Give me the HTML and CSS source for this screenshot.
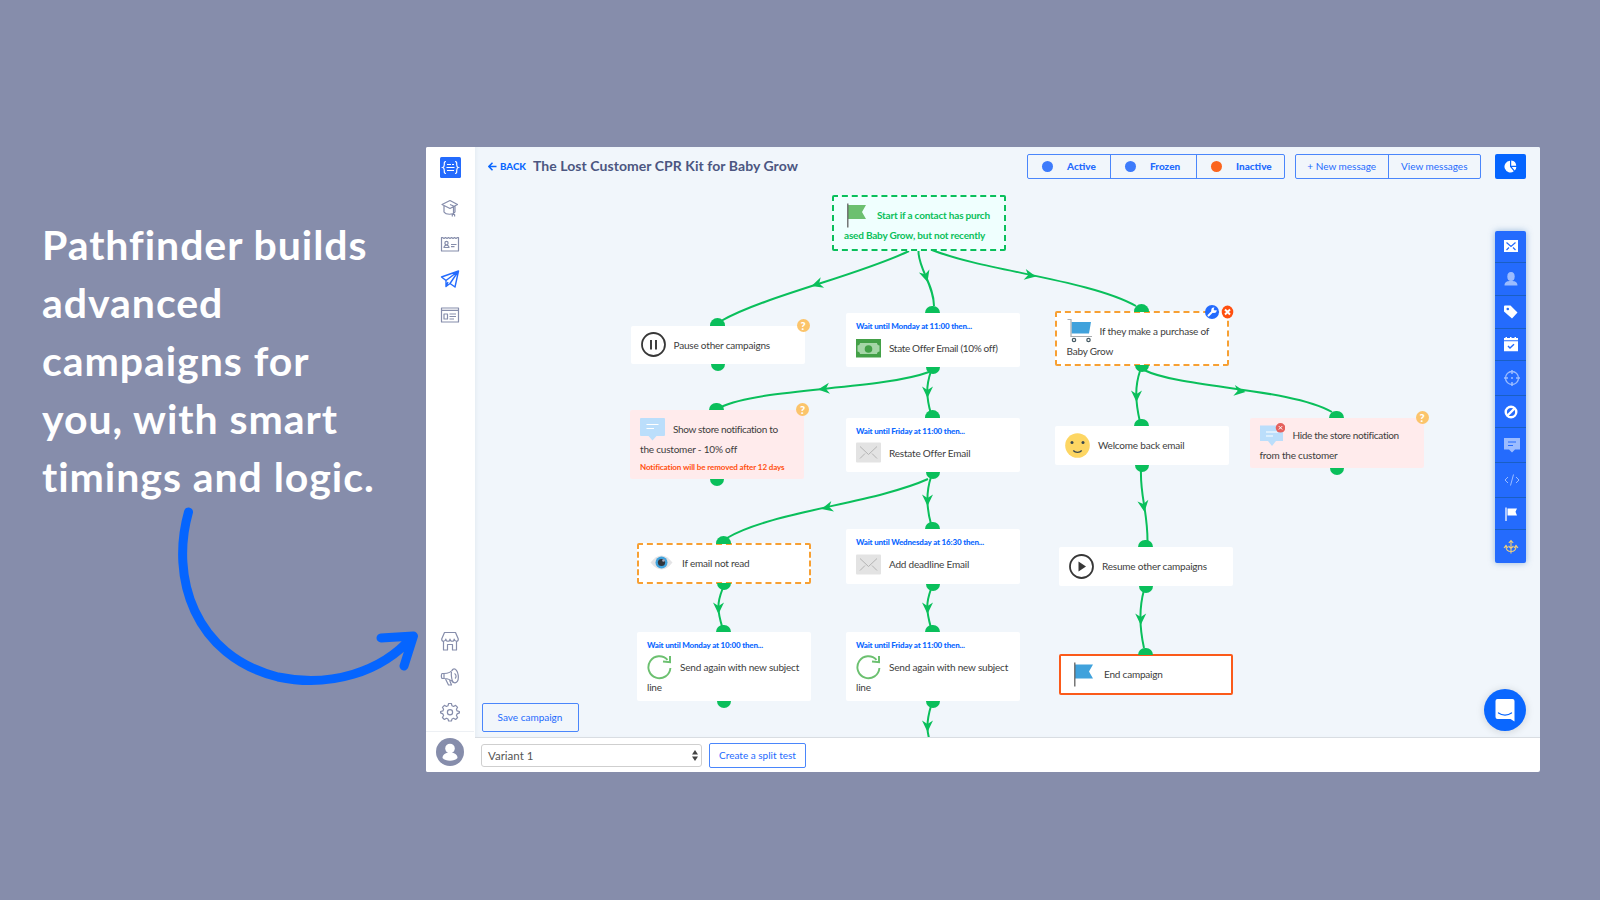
FILE: index.html
```html
<!DOCTYPE html>
<html lang="en">
<head>
    <meta charset="UTF-8">
    <meta name="viewport" content="width=device-width, initial-scale=1.0">
    <title>Pathfinder</title>
    <link rel="stylesheet" href="styles.css">
</head>
<body>
    <!-- shared icons -->
    <svg class="sprite">
        <symbol id="i-mail" viewBox="0 0 25 20"><rect width="25" height="20" rx="1" fill="#e3e3e3"/><path d="M4 4l8.5 8L21 4M4 16l5-5M21 16l-5-5" fill="none" stroke="#b4b4b4"/></symbol>
        <symbol id="i-again" viewBox="0 0 25 25"><path d="M20.5 4.8A11 11 0 1 0 23.4 13" fill="none" stroke="#6cc070" stroke-width="1.9"/><path d="M23 1V7.2L16 6.6" fill="none" stroke="#6cc070" stroke-width="2"/></symbol>
        <symbol id="i-bubble" viewBox="0 0 25 23"><path d="M1 0h23a1 1 0 0 1 1 1v16a1 1 0 0 1-1 1h-7.5l-4 4.500l-4-4.500H1a1 1 0 0 1-1-1V1a1 1 0 0 1 1-1z" fill="#bbdefb"/><path d="M6.500 6.500h12M6.500 10.500h7.500" stroke="#fff" stroke-width="1.200"/></symbol>
    </svg>

    <div class="intro">
        <h1>Pathfinder builds<br>advanced<br>campaigns for<br>you, with smart<br>timings and logic.</h1>
        <svg class="swoosh" viewBox="170 500 260 200" width="260" height="200">
            <path d="M188.500 512C170 577 194 656 278 677C330 688 382 672 412 637M381 638L413.500 636L404 666"/>
        </svg>
    </div>

    <div class="app">
        <nav class="sidebar">
            <svg class="logo" viewBox="0 0 21 21" width="21" height="21"><rect width="21" height="21" rx="1.500" fill="#246bfd"/><path d="M6 4.500c-2 0-1.700 1.500-1.700 3s0 2.500-1.500 3c1.500.5 1.500 1.500 1.500 3s-.3 3 1.700 3M15 4.500c2 0 1.700 1.500 1.700 3s0 2.500 1.500 3c-1.500.5-1.500 1.500-1.500 3s.3 3-1.700 3M7 7.500h4M12 7.500h2M6.500 10.500h8M7 13.500h7" fill="none" stroke="#fff" stroke-width="1.200"/></svg>
            <svg class="nav-icon" viewBox="0 0 20 20"><path d="M2 6.500L10 2.500l7.500 4-7.500 4zM4 8v6c2 3 9 3 11 0V8M10 6.500l3.500 1.500v8.500M12.300 18.500v-2h2.300v2"/></svg>
            <svg class="nav-icon" viewBox="0 0 20 20"><path d="M1.500 3.500v13.500h17V3.500h-1l-1.500 1-1.500-1-1.500 1-1.500-1-1.500 1-1.500-1-1.500 1-1.500-1-1.500 1-1.500-1zM4 13.500c0-2 1-2 2-2.300h1c1 .3 2 .3 2 2.300zM6.500 7.300a1.500 1.700 0 1 1 0 3.600a1.500 1.700 0 1 1 0-3.600M11 10.500h5.500M11 12.700h3.500"/></svg>
            <svg class="nav-icon active" viewBox="0 0 20 20"><path d="M1.500 8L18.500 2l-3.500 16-5-3.500-4 3V11.500zM6 11.500L18.500 2l-8.500 12.500M6 17.500l2-4.500"/></svg>
            <svg class="nav-icon" viewBox="0 0 20 20"><path d="M1.500 3h17v14h-17zM1.500 5.300h17M4 9h3.500v5H4zM9.500 9h6.500M9.500 11.500h6.500M9.500 14h4.500"/></svg>
            <div class="spacer"></div>
            <svg class="nav-icon" viewBox="0 0 20 20"><path d="M4.500 1.500h11l2.800 6.500c0 3-3.500 3-4.100 0c0 3-4.100 3-4.200 0c0 3-4.100 3-4.200 0c-.5 3-4.100 3-4.100 0zM3.500 10.500v8.500h4v-5.500h5v5.500h4v-8.500"/></svg>
            <svg class="nav-icon" viewBox="0 0 20 20"><path d="M2 6.500h2v5h-2c-.8-1.500-.8-3.500 0-5zM4 6.500c4 0 7-1 9.500-4.500M4 11.500c4 0 7 1 9.500 4.300M5.500 12l3 6h3l-2-5M13.500 2c5-1 7 12.500 1.500 13.800c-4 .2-5-13-1.500-13.800zM14.500 6.500c2 1 2 4 .5 5"/></svg>
            <svg class="nav-icon gear" viewBox="0 0 20 20"><path d="M8.600 1.500h2.800l.6 2.300 1.600.7 2-1.200 2 2-1.200 2 .7 1.600 2.300.6v1.400l-2.300 1-.7 1.600 1.200 2-2 2-2-1.200-1.600.7-.6 2H8.600l-.6-2-1.600-.7-2 1.200-2-2 1.200-2-.7-1.600-2.300-1V9.500l2.300-.6.7-1.600-1.200-2 2-2 2 1.200 1.600-.7z"/><circle cx="10" cy="10.300" r="2.600"/></svg>
            <div class="profile">
                <svg viewBox="0 0 28 28" width="28" height="28"><circle cx="14" cy="14" r="14" fill="#868dab"/><circle cx="14" cy="10.500" r="4.800" fill="#fff"/><path d="M6.500 20c0-3.500 3-5 5-5h5c2 0 5 1.500 5 5c-3 3.500-12 3.500-15 0z" fill="#fff"/></svg>
            </div>
        </nav>

        <div class="main">
            <div class="canvas">
                <svg class="edges" viewBox="475 147 1065 590" width="1065" height="590">
                    <path d="M909 251C860 275 765 296 721 321"/>
                    <path d="M918.500 251C918 268 934 285 934 306"/>
                    <path d="M932 250C985 271 1090 280 1136 306"/>
                    <path d="M929 372C880 390 760 388 721 407"/>
                    <path d="M931 371C926 386 926 396 931 414"/>
                    <path d="M928 479C875 503 770 512 727 538"/>
                    <path d="M931 477C926 492 926 506 931 524"/>
                    <path d="M931 589C926 603 926 610 931 628"/>
                    <path d="M722.500 589C717 603 717 610 722.500 628"/>
                    <path d="M931 706C927 719 926 728 929 738"/>
                    <path d="M1140 371C1135 386 1135 400 1140 422"/>
                    <path d="M1144 370C1180 388 1290 388 1332 412"/>
                    <path d="M1141 470C1140 496 1147.500 510 1147.500 541"/>
                    <path d="M1144 590C1139 608 1140 630 1144 648"/>
                    <g class="heads">
                        <path d="M0 0L-11.500-5.500L-8 0L-11.500 5.500Z" transform="translate(811.500 286)rotate(162)"/>
                        <path d="M0 0L-11.500-5.500L-8 0L-11.500 5.500Z" transform="translate(927.500 282)rotate(73)"/>
                        <path d="M0 0L-11.500-5.500L-8 0L-11.500 5.500Z" transform="translate(1036 276.500)rotate(11)"/>
                        <path d="M0 0L-11.500-5.500L-8 0L-11.500 5.500Z" transform="translate(818 389.500)rotate(174)"/>
                        <path d="M0 0L-11.500-5.500L-8 0L-11.500 5.500Z" transform="translate(927.500 398)rotate(90)"/>
                        <path d="M0 0L-11.500-5.500L-8 0L-11.500 5.500Z" transform="translate(821.500 509)rotate(166)"/>
                        <path d="M0 0L-11.500-5.500L-8 0L-11.500 5.500Z" transform="translate(927.500 506)rotate(90)"/>
                        <path d="M0 0L-11.500-5.500L-8 0L-11.500 5.500Z" transform="translate(927.500 614)rotate(90)"/>
                        <path d="M0 0L-11.500-5.500L-8 0L-11.500 5.500Z" transform="translate(718.500 614)rotate(90)"/>
                        <path d="M0 0L-11.500-5.500L-8 0L-11.500 5.500Z" transform="translate(927.500 732)rotate(90)"/>
                        <path d="M0 0L-11.500-5.500L-8 0L-11.500 5.500Z" transform="translate(1136.500 402)rotate(90)"/>
                        <path d="M0 0L-11.500-5.500L-8 0L-11.500 5.500Z" transform="translate(1245.500 392)rotate(8)"/>
                        <path d="M0 0L-11.500-5.500L-8 0L-11.500 5.500Z" transform="translate(1144.500 512)rotate(82)"/>
                        <path d="M0 0L-11.500-5.500L-8 0L-11.500 5.500Z" transform="translate(1140.700 625)rotate(90)"/>
                    </g>
                </svg>

                <div class="node start n-start">
                    <div class="row"><svg class="icon" viewBox="0 0 25 25"><path d="M4 2h18l-4 7 4 7H4z" fill="#6cc070"/><path d="M3.800.5v24" stroke="#616161" stroke-width="1.300"/></svg><span>Start if a contact has purch</span></div>
                    <div class="row">ased Baby Grow, but not recently</div>
                </div>

                <div class="node ports n-pause">
                    <div class="row"><svg class="icon" viewBox="0 0 25 25"><circle cx="12.500" cy="12.500" r="11.500" fill="none" stroke="#373737" stroke-width="1.800"/><path d="M10 8v9.500M15 8v9.500" stroke="#373737" stroke-width="1.900"/></svg><span>Pause other campaigns</span></div>
                    <b class="help">?</b>
                </div>

                <div class="node ports timed n-state">
                    <div class="wait">Wait until Monday at 11:00 then...</div>
                    <div class="row tight"><svg class="icon" viewBox="0 0 25 25"><path d="M0 3h25v18.500H0z" fill="#43a047"/><path d="M4 7h17c0 1.500 1 2.500 2.500 2.500v6c-1.500 0-2.500 1-2.500 2.500H4c0-1.500-1-2.500-2.500-2.500v-6C3 9.500 4 8.500 4 7z" fill="#a5d6a7"/><circle cx="12.500" cy="13" r="3.800" fill="#43a047"/></svg><span>State Offer Email (10% off)</span></div>
                </div>

                <div class="node ports condition n-purchase">
                    <div class="row"><svg class="icon" viewBox="0 0 25 25"><path d="M4.500 4H24l-2 11.500H4.500z" fill="#40a2dc"/><path d="M.5 1.500H4V18.500H25" fill="none" stroke="#a9adb0" stroke-width="1.200"/><circle cx="7" cy="22" r="1.700" fill="#fff" stroke="#455a64" stroke-width="1.200"/><circle cx="21.500" cy="22" r="1.700" fill="#fff" stroke="#455a64" stroke-width="1.200"/></svg><span>If they make a purchase of</span></div>
                    <div class="row">Baby Grow</div>
                    <svg class="tools" viewBox="0 0 30 14" width="30" height="14"><circle cx="7" cy="7" r="7" fill="#246bfd"/><path d="M3.500 10.500L8 6" stroke="#fff" stroke-width="2" stroke-linecap="round"/><path d="M9.500 2.600A2.700 2.700 0 1 0 11.600 5L9.800 5.600 8.600 4.300z" fill="#fff"/><ellipse cx="22.500" cy="7" rx="5.800" ry="6.500" fill="#ff4f0f"/><path d="M20 4.500l5 5M25 4.500l-5 5" stroke="#fff" stroke-width="2"/></svg>
                </div>

                <div class="node ports warn n-show">
                    <div class="row tight"><svg class="icon"><use href="#i-bubble"/></svg><span>Show store notification to</span></div>
                    <div class="row">the customer - 10% off</div>
                    <div class="note">Notification will be removed after 12 days</div>
                    <b class="help">?</b>
                </div>

                <div class="node ports timed n-restate">
                    <div class="wait">Wait until Friday at 11:00 then...</div>
                    <div class="row"><svg class="icon"><use href="#i-mail"/></svg><span>Restate Offer Email</span></div>
                </div>

                <div class="node ports n-welcome">
                    <div class="row"><svg class="icon" viewBox="0 0 25 25"><circle cx="12.500" cy="12.500" r="12.300" fill="#fdd663"/><circle cx="7" cy="9.500" r="1.500" fill="#37474f"/><circle cx="18" cy="9.500" r="1.500" fill="#37474f"/><path d="M8.300 17.500c2 2.500 6.400 2.500 8.400 0" fill="none" stroke="#37474f" stroke-width="1.300"/></svg><span>Welcome back email</span></div>
                </div>

                <div class="node ports warn n-hide">
                    <div class="row tight"><svg class="icon" viewBox="0 0 25 25"><path d="M1 2.500h22v15.500h-7l-4 5-4-5H0V2.500z" fill="#bbdefb"/><path d="M6 9h12M6 13h7" stroke="#fff" stroke-width="1.200"/><circle cx="20.500" cy="4.800" r="4.800" fill="#e5605c"/><path d="M18.800 3.100l3.400 3.400M22.200 3.100l-3.400 3.400" stroke="#fff"/></svg><span>Hide the store notification</span></div>
                    <div class="row">from the customer</div>
                    <b class="help">?</b>
                </div>

                <div class="node ports condition n-unread">
                    <div class="row"><svg class="icon" viewBox="0 0 25 25"><path d="M1.500 12.500Q12.500-1.500 23.500 12.500Q12.500 26.500 1.500 12.500z" fill="#e4e4e6"/><circle cx="12.500" cy="12.500" r="6" fill="#40a2dc"/><circle cx="12.500" cy="12.500" r="3.600" fill="#31353c"/><circle cx="14.500" cy="10.500" r="1.300" fill="#aab"/></svg><span>If email not read</span></div>
                </div>

                <div class="node ports timed n-deadline">
                    <div class="wait">Wait until Wednesday at 16:30 then...</div>
                    <div class="row"><svg class="icon"><use href="#i-mail"/></svg><span>Add deadline Email</span></div>
                </div>

                <div class="node ports n-resume">
                    <div class="row"><svg class="icon" viewBox="0 0 25 25"><circle cx="12.500" cy="12.500" r="11.500" fill="none" stroke="#373737" stroke-width="1.800"/><path d="M9.500 7.500L17 12.500L9.500 17.500z" fill="#373737"/></svg><span>Resume other campaigns</span></div>
                </div>

                <div class="node ports timed n-again-left">
                    <div class="wait">Wait until Monday at 10:00 then...</div>
                    <div class="row"><svg class="icon"><use href="#i-again"/></svg><span>Send again with new subject</span></div>
                    <div class="row">line</div>
                </div>

                <div class="node ports timed n-again">
                    <div class="wait">Wait until Friday at 11:00 then...</div>
                    <div class="row"><svg class="icon"><use href="#i-again"/></svg><span>Send again with new subject</span></div>
                    <div class="row">line</div>
                </div>

                <div class="node ports end n-end">
                    <div class="row"><svg class="icon" viewBox="0 0 25 25"><path d="M4 2.500h18l-4 7 4 7H4z" fill="#40a2dc"/><path d="M3.800.5v24" stroke="#616161" stroke-width="1.300"/></svg><span>End campaign</span></div>
                </div>

                <header class="topbar">
                    <a class="back"><svg viewBox="0 0 9 9" width="9" height="9"><path d="M8.500 4.500H1M4.500.8L.9 4.500L4.500 8.200" fill="none" stroke="#0a67ff" stroke-width="1.500"/></svg>BACK</a>
                    <h2>The Lost Customer CPR Kit for Baby Grow</h2>
                    <div class="group status">
                        <span class="s-active"><i></i>Active</span>
                        <span class="s-frozen"><i></i>Frozen</span>
                        <span class="s-inactive"><i class="off"></i>Inactive</span>
                    </div>
                    <div class="group messages">
                        <span>+ New message</span>
                        <span>View messages</span>
                    </div>
                    <div class="chart"><svg viewBox="0 0 13 13" width="13" height="13"><path d="M6 .8v6l3.800 4.400A5.800 5.800 0 1 1 6 .8z" fill="#fff"/><path d="M7.200.5a5.500 5.500 0 0 1 5 5.300h-5zM7.800 7h4.500a5 5 0 0 1-1.600 3.500z" fill="#fff"/></svg></div>
                </header>

                <div class="palette">
                    <div class="p1"><svg viewBox="0 0 16 16"><path d="M1 2h14v12H1z" fill="#fff"/><path d="M3.500 4.500L8 8.500l4.500-4M3.500 12L6 9.500M12.500 12L10 9.500" fill="none" stroke="#246bfd" stroke-width="1.200"/></svg></div>
                    <div class="p2 dim"><svg viewBox="0 0 16 16"><ellipse cx="8" cy="5.500" rx="3.700" ry="4.500" fill="#fff"/><path d="M1.500 14.500c0-4 3-4 4.500-4.500h4c1.500.5 4.500.5 4.500 4.500z" fill="#fff"/></svg></div>
                    <div class="p3"><svg viewBox="0 0 16 16"><path d="M1 2.500a1 1 0 0 1 1-1H7.500L14.500 8.500 9 14.500 1 7.500z" fill="#fff"/><circle cx="4.800" cy="5" r="1.300" fill="#246bfd"/></svg></div>
                    <div class="p4"><svg viewBox="0 0 16 16"><path d="M1 2h1.500V1H4v1h3V1h1.500v1h3V1H13v1h2v2.200H1zM1 5.200h14v10H1z" fill="#fff"/><path d="M5 10l2 2 4-3.800" fill="none" stroke="#246bfd" stroke-width="1.400"/></svg></div>
                    <div class="p5 dim"><svg viewBox="0 0 16 16"><circle cx="9" cy="8" r="6.500" fill="none" stroke="#fff" stroke-width="1.300"/><path d="M9 0v4M9 12v4M1 8h4M13 8h4M8 8h2" stroke="#fff" stroke-width="1.500"/></svg></div>
                    <div class="p6"><svg viewBox="0 0 16 16"><circle cx="8" cy="8" r="5.300" fill="none" stroke="#fff" stroke-width="2.400"/><path d="M4.500 11.500l7-7" stroke="#fff" stroke-width="2.400"/></svg></div>
                    <div class="p7 dim"><svg viewBox="0 0 16 16"><path d="M1 1h16v11.500h-5l-3 3-3-3H1z" fill="#fff"/><path d="M5 5h8M5 8.500h5" stroke="#246bfd"/></svg></div>
                    <div class="p8 dim"><svg viewBox="0 0 16 16"><path d="M5 5L2 8l3 3M13 5l3 3-3 3M10.500 2.500l-3 11" fill="none" stroke="#fff"/></svg></div>
                    <div class="p9"><svg viewBox="0 0 16 16"><path d="M4.500 2.500h9.500l-1.500 3.300L14 9.500H4.500z" fill="#fff"/><path d="M3 1.500v13.500" stroke="#dbe6ff" stroke-width="1.500"/></svg></div>
                    <div class="p10"><svg viewBox="0 0 16 16"><path d="M8 14.500V2M5.800 4L8 1.500 10.200 4M8 12.500c-3 0-5-1.500-5-5M8 12.500c3 0 5-1.500 5-5M1 9l2-2.500L5 9M11 9l2-2.500L15 9M5.500 7L8 9.500 10.500 7" fill="none" stroke="#f3cf7a" stroke-width="1.100"/></svg></div>
                </div>

                <button class="save">Save campaign</button>
                <div class="chat"><svg viewBox="0 0 20 23" width="20" height="23"><path d="M2.500 0h15a2 2 0 0 1 2 2v20.500l-4-2.500h-13a2 2 0 0 1-2-2V2a2 2 0 0 1 2-2z" fill="#fff"/><path d="M3.500 14c3.500 2.700 9.500 2.700 13 0" fill="none" stroke="#0a67ff" stroke-width="1.300" stroke-linecap="round"/></svg></div>
            </div>

            <footer class="bottombar">
                <div class="variant">Variant 1<svg viewBox="0 0 6 11" width="6" height="11"><path d="M0 4.500L3 0l3 4.500zM0 6.500h6L3 11z" fill="#444"/></svg></div>
                <button class="split">Create a split test</button>
            </footer>
        </div>
    </div>
</body>
</html>
```
FILE: styles.css
```css
* {
    box-sizing: border-box;
}

body {
    margin: 0;
    width: 1600px;
    height: 900px;
    overflow: hidden;
    display: flex;
    padding-top: 147px;
    background-color: #868dab;
    font-family: Lato, "Open Sans", sans-serif;
}

.sprite {
    display: none;
}

/* left side pitch */
.intro {
    width: 426px;
    flex-shrink: 0;
    padding: 69px 0 0 42px;
}

h1 {
    margin: 0;
    color: #fff;
    font-size: 41px;
    line-height: 58px;
    font-weight: 700;
    letter-spacing: 0.95px;
    white-space: nowrap;
}

.swoosh {
    position: absolute;
    left: 170px;
    top: 500px;
    z-index: 2;
    fill: none;
    stroke: #0565ff;
    stroke-width: 9;
    stroke-linecap: round;
    stroke-linejoin: round;
}

/* app window */
.app {
    width: 1114px;
    height: 625px;
    display: flex;
    background-color: #fff;
    border-radius: 2px;
    overflow: hidden;
}

.sidebar {
    width: 49px;
    display: flex;
    flex-direction: column;
    align-items: center;
    padding-top: 10px;
    padding-right: 1px;
    background-color: #fff;
}

.logo {
    margin-bottom: 20px;
}

.nav-icon {
    width: 20px;
    height: 20px;
    margin-bottom: 15.5px;
    flex-shrink: 0;
    fill: none;
    stroke: #868dab;
    stroke-width: 1.2;
    stroke-linejoin: round;
}

.nav-icon.active {
    stroke: #246bfd;
    stroke-width: 1.4;
}

.spacer {
    flex-grow: 1;
}

.nav-icon.gear {
    margin-bottom: 9px;
}

.profile {
    width: 100%;
    height: 41px;
    border-top: 1px solid #edf0f4;
    padding-top: 6px;
    text-align: center;
    flex-shrink: 0;
}

.main {
    flex-grow: 1;
    display: flex;
    flex-direction: column;
}

.canvas {
    position: relative;
    height: 590px;
    background-color: #f1f6fb;
    box-shadow: inset 3px 0 4px -2px #e3eaf1;
    overflow: hidden;
}

.edges {
    position: absolute;
    left: 0;
    top: 0;
    fill: none;
    stroke: #0abf5b;
    stroke-width: 2;
}

.heads {
    fill: #0abf5b;
    stroke: none;
}

/* top bar */
.topbar {
    position: relative;
    display: flex;
    align-items: center;
    height: 25px;
    margin-top: 6.5px;
    padding: 0 14px 0 13px;
}

.back {
    display: flex;
    align-items: center;
    gap: 3px;
    width: 45px;
    color: #0a67ff;
    font-size: 9.7px;
    font-weight: 900;
}

h2 {
    margin: 0 auto 0 0;
    color: #4c5681;
    font-size: 14px;
    font-weight: 700;
    letter-spacing: 0.06px;
    line-height: 20px;
}

.group {
    display: flex;
    height: 25px;
    border: 1px solid #4a86fb;
    border-radius: 2px;
    color: #246bfd;
    font-size: 10px;
}

.group span {
    display: flex;
    align-items: center;
    padding-bottom: 1px;
}

.group span + span {
    border-left: 1px solid #4a86fb;
}

.status {
    width: 258px;
    margin-right: 10px;
    font-weight: 900;
}

.status i {
    width: 11px;
    height: 11px;
    margin: 1px 14px 0 14px;
    border-radius: 50%;
    background-color: #3d7bfb;
}

.status i.off {
    background-color: #fb651e;
}

.s-active {
    width: 82px;
}

.s-frozen {
    width: 86px;
}

.messages {
    width: 186px;
    margin-right: 14px;
}

.messages span {
    flex: 1;
    justify-content: center;
}

.chart {
    width: 31px;
    height: 25px;
    display: flex;
    align-items: center;
    justify-content: center;
    background-color: #0565ff;
    border-radius: 2px;
}

/* campaign nodes */
.node {
    position: absolute;
    width: 174px;
    padding: 9px 10px 0;
    background-color: #fff;
    border-radius: 2px;
    color: #3d3d3d;
    font-size: 10px;
    letter-spacing: -0.2px;
    white-space: nowrap;
}

.row {
    display: flex;
    align-items: center;
    gap: 8px;
    height: 20px;
}

.row.tight {
    letter-spacing: -0.33px;
}

.icon {
    width: 25px;
    height: 25px;
    flex-shrink: 0;
}

.timed {
    padding-top: 5px;
}

.wait {
    height: 16px;
    margin-bottom: 4px;
    line-height: 16px;
    color: #0a67ff;
    font-size: 8px;
    font-weight: 900;
    letter-spacing: -0.17px;
}

.note {
    line-height: 16px;
    color: #ff4f0f;
    font-size: 8px;
    font-weight: 700;
    letter-spacing: -0.1px;
}

.start {
    padding-top: 8px;
    border: 2px dashed #0abf5b;
    background-color: #effffe;
    color: #0abf5b;
    font-weight: 700;
}

.condition {
    padding-top: 8px;
    border: 2px dashed #f7a033;
}

.end {
    padding-top: 8px;
    border: 2px solid #fb5a1a;
}

.warn {
    background-color: #ffebec;
}

/* half circles where the connectors meet a node */
.ports::before,
.ports::after {
    content: "";
    position: absolute;
    left: 50%;
    background-color: #0abf5b;
}

.ports::before {
    bottom: 100%;
    width: 15px;
    height: 7.5px;
    margin-left: -8px;
    border-radius: 8px 8px 0 0;
}

.ports::after {
    top: 100%;
    width: 14px;
    height: 7px;
    margin-left: -7px;
    border-radius: 0 0 7px 7px;
}

.condition::before,
.end::before {
    bottom: calc(100% + 1px);
}

.condition::after {
    top: calc(100% + 1px);
}

.end::after {
    display: none;
}

.help {
    position: absolute;
    right: -5px;
    top: -7px;
    width: 13px;
    height: 13px;
    border-radius: 50%;
    background-color: #fbc46b;
    color: #fff;
    font-size: 11px;
    line-height: 13px;
    text-align: center;
    font-weight: 900;
}

.tools {
    position: absolute;
    right: -8px;
    top: -8px;
}

.n-start { left: 357px; top: 48px; height: 55.5px; }
.n-pause { left: 155.5px; top: 178.5px; height: 38.5px; }
.n-state { left: 371px; top: 166px; height: 54px; }
.n-purchase { left: 579.5px; top: 163.5px; height: 55.5px; }
.n-show { left: 155px; top: 263px; height: 69px; }
.n-restate { left: 371px; top: 270.5px; height: 54.5px; }
.n-welcome { left: 580px; top: 279px; height: 38.5px; }
.n-hide { left: 774.5px; top: 271px; height: 50px; padding-top: 7px; }
.n-unread { left: 162px; top: 395.5px; height: 41.5px; }
.n-deadline { left: 371px; top: 382px; height: 55px; }
.n-resume { left: 584px; top: 400px; height: 38.5px; }
.n-again-left { left: 162px; top: 485px; height: 69px; }
.n-again { left: 371px; top: 485px; height: 69px; }
.n-end { left: 584px; top: 507px; height: 41px; }

/* element palette on the right */
.palette {
    position: absolute;
    left: 1020px;
    top: 83.5px;
    width: 31px;
    background-color: #246bfd;
    border-radius: 2px;
    box-shadow: 0 0 6px rgba(60, 120, 190, 0.5);
}

.palette div {
    display: flex;
    align-items: center;
    justify-content: center;
    height: 32.7px;
    border-bottom: 1px solid #1a5fc4;
}

.palette div:last-child {
    border-bottom: none;
}

.palette svg {
    width: 16px;
    height: 16px;
    overflow: visible;
}

.palette .dim svg {
    opacity: 0.55;
}

.palette .p5,
.palette .p7 {
    height: 34.5px;
}

.palette .p8 {
    height: 35.5px;
}

.palette .p9 {
    height: 32px;
}

button {
    padding: 0 0 2px;
    background-color: transparent;
    border: 1px solid #4a86fb;
    border-radius: 2px;
    color: #246bfd;
    font-family: inherit;
    font-size: 10px;
}

.save {
    position: absolute;
    left: 6.5px;
    bottom: 5px;
    width: 97px;
    height: 29px;
}

.chat {
    position: absolute;
    left: 1009px;
    top: 542px;
    width: 42px;
    height: 42px;
    display: flex;
    align-items: center;
    justify-content: center;
    border-radius: 50%;
    background-color: #0a67ff;
    box-shadow: 0 1px 8px rgba(0, 0, 0, 0.15);
}

.bottombar {
    display: flex;
    align-items: center;
    gap: 7px;
    height: 35px;
    padding-left: 6px;
    border-top: 1px solid #d9dde2;
}

.variant {
    display: flex;
    align-items: center;
    justify-content: space-between;
    width: 221px;
    height: 23px;
    padding: 0 3px 0 6px;
    border: 1px solid #cfcfcf;
    border-radius: 3px;
    color: #555;
    font-size: 11.5px;
}

.split {
    width: 97px;
    height: 25px;
    padding-bottom: 0;
}
```
